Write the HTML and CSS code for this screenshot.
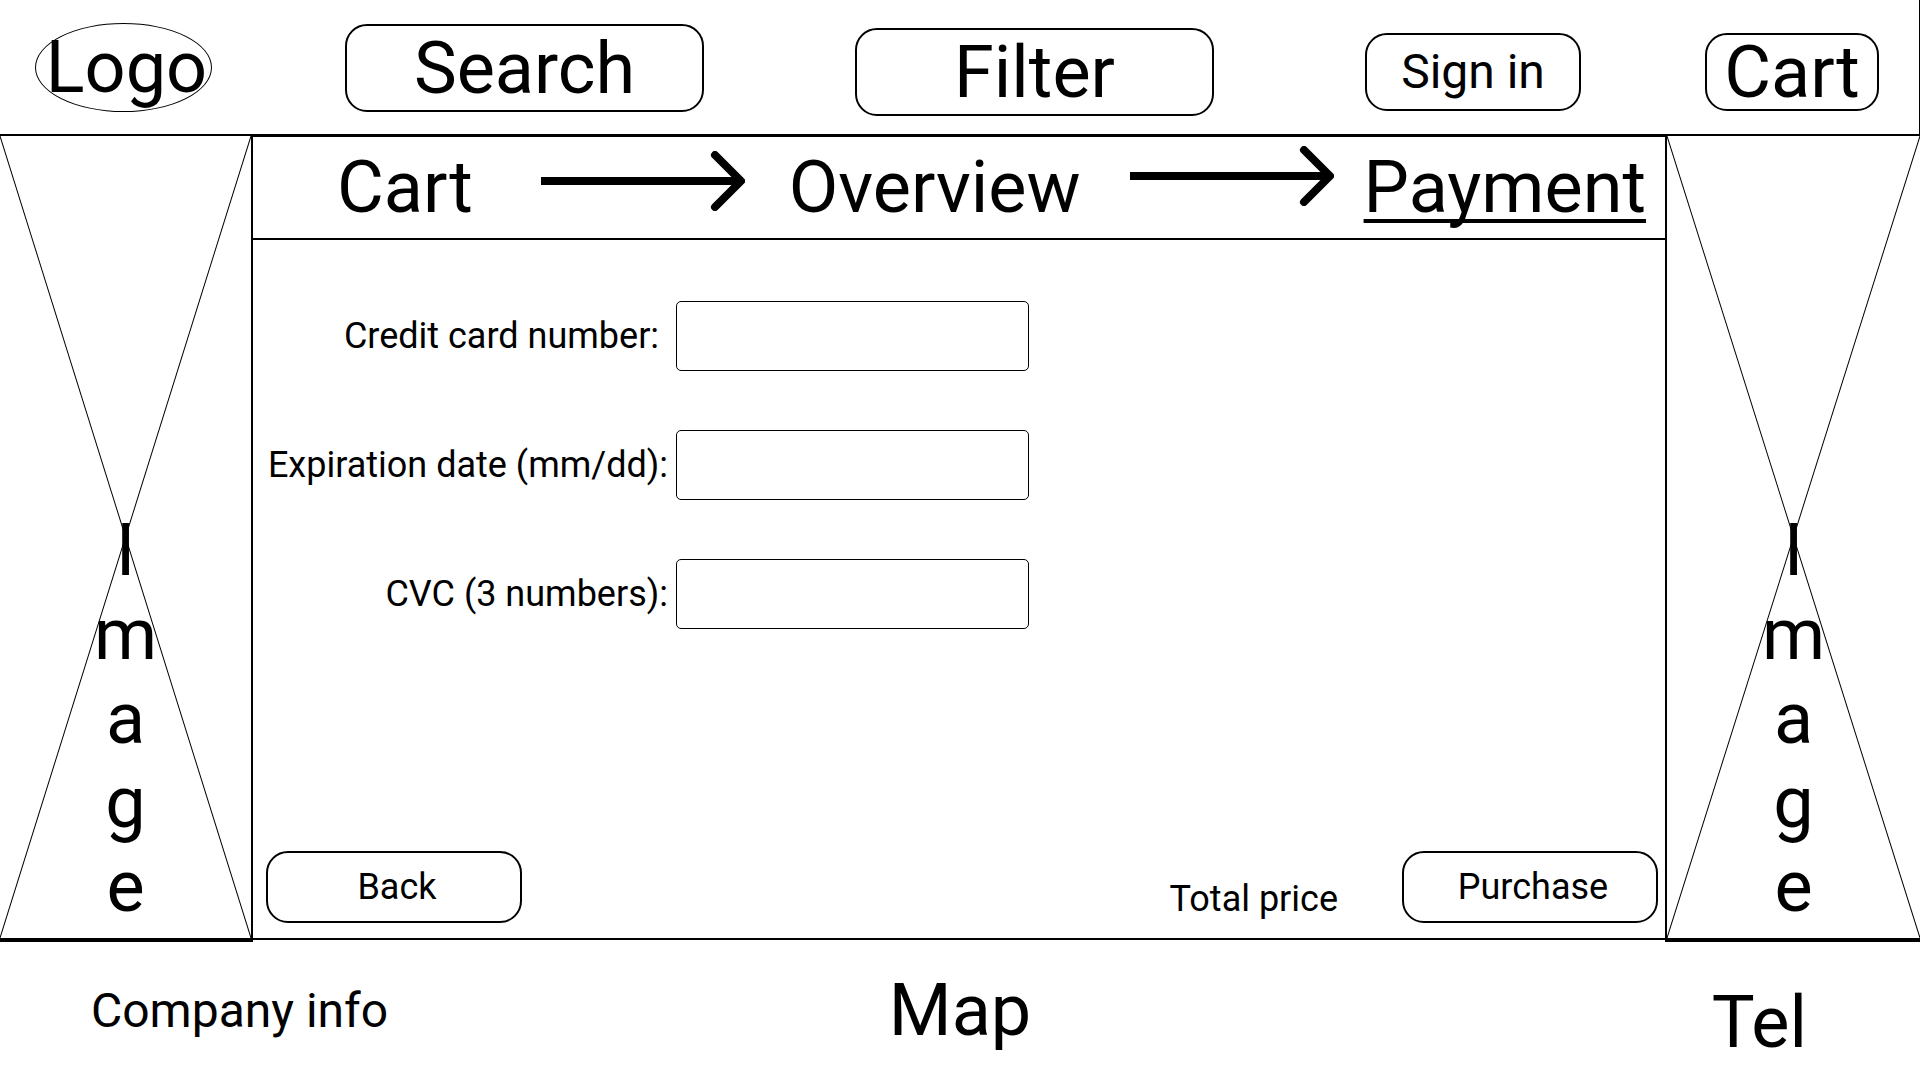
FILE: index.html
```html
<!DOCTYPE html>
<html lang="en">
<head>
  <meta charset="utf-8">
  <meta name="viewport" content="width=device-width, initial-scale=1">
  <title>Payment</title>
  <link rel="stylesheet" href="styles.css">
</head>
<body>
  <header class="header">
    <div class="header-lead">
      <a class="logo" href="#">Logo</a>
      <button class="box box-wide" type="button">Search</button>
    </div>
    <div class="header-actions">
      <button class="box box-wide filter" type="button">Filter</button>
      <button class="box box-sign-in" type="button">Sign in</button>
      <button class="box box-cart" type="button">Cart</button>
    </div>
  </header>

  <div class="content">
    <aside class="banner banner-left">
      <svg class="banner-cross" viewBox="0 0 100 100" preserveAspectRatio="none" aria-hidden="true">
        <path d="M0 0L100 100M100 0L0 100"/>
      </svg>
      <p class="banner-text"><span>I</span><span>m</span><span>a</span><span>g</span><span>e</span></p>
    </aside>

    <main class="checkout">
      <ol class="steps">
        <li class="step-cart">Cart</li>
        <li class="step-arrow" aria-hidden="true">
          <svg class="arrow" viewBox="0 0 204 60"><path class="shaft" d="M0 30H200"/><path class="head" d="M174 4L200 30L174 56"/></svg>
        </li>
        <li class="step-overview">Overview</li>
        <li class="step-arrow step-arrow-raised" aria-hidden="true">
          <svg class="arrow" viewBox="0 0 204 60"><path class="shaft" d="M0 30H200"/><path class="head" d="M174 4L200 30L174 56"/></svg>
        </li>
        <li class="step-payment" aria-current="step">Payment</li>
      </ol>

      <form class="payment">
        <div class="fields">
          <label for="card">Credit card number:&nbsp;</label>
          <input id="card" type="text" inputmode="numeric">
          <label for="expiry">Expiration date (mm/dd):</label>
          <input id="expiry" type="text">
          <label for="cvc">CVC (3 numbers):</label>
          <input id="cvc" type="text" inputmode="numeric">
        </div>
        <div class="actions">
          <button class="box box-action" type="button">Back</button>
          <p class="total">Total price</p>
          <button class="box box-action" type="submit">Purchase</button>
        </div>
      </form>
    </main>

    <aside class="banner banner-right">
      <svg class="banner-cross" viewBox="0 0 100 100" preserveAspectRatio="none" aria-hidden="true">
        <path d="M0 0L100 100M100 0L0 100"/>
      </svg>
      <p class="banner-text"><span>I</span><span>m</span><span>a</span><span>g</span><span>e</span></p>
    </aside>
  </div>

  <footer class="footer">
    <p class="company">Company info</p>
    <p class="map">Map</p>
    <p class="tel">Tel</p>
  </footer>
</body>
</html>
```
FILE: styles.css
```css
* {
  box-sizing: border-box;
}

body {
  display: flex;
  flex-direction: column;
  min-height: 100vh;
  margin: 0;
  background: #fff;
  color: #000;
  font-family: Roboto, sans-serif;
  font-size: 72px;
  line-height: 84px;
}

p,
ol {
  margin: 0;
  padding: 0;
  list-style: none;
}

/* Outlined buttons */
.box {
  height: 88px;
  padding: 2px 0 0;
  border: 2px solid #000;
  border-radius: 22px;
  background: #fff;
  color: inherit;
  font: inherit;
  line-height: 72px;
  white-space: nowrap;
}

.box-wide {
  width: 359px;
}

.box-sign-in {
  width: 216px;
  height: 78px;
  padding: 0;
  font-size: 48px;
}

.box-cart {
  width: 174px;
  height: 78px;
}

.box-action {
  width: 256px;
  height: 72px;
  padding: 0 0 0 6px;
  font-size: 36px;
  line-height: 48px;
}

/* Header */
.header {
  display: flex;
  justify-content: space-between;
  min-height: 136px;
  padding: 0 40px 0 35px;
  border-right: 1px solid #000;
  border-bottom: 2px solid #000;
}

.header-lead,
.header-actions {
  display: flex;
  align-items: center;
}

.header-lead {
  gap: 133px;
  padding-top: 1px;
}

.header-actions {
  gap: 124px;
  padding-top: 10px;
}

.filter {
  margin-right: 27px;
}

.logo {
  display: flex;
  align-items: center;
  justify-content: center;
  width: 177px;
  height: 89px;
  padding-left: 6px;
  border: 1px solid #000;
  border-radius: 50%;
  color: inherit;
  text-decoration: none;
}

/* Middle band */
.content {
  display: grid;
  grid-template-columns: 253px 1fr 255px;
  flex: 1;
}

.banner {
  position: relative;
  display: flex;
  flex-direction: column;
  justify-content: flex-end;
  padding-bottom: 9px;
  border-bottom: 4px solid #000;
}

.banner-left {
  border-right: 2px solid #000;
}

.banner-right {
  border-left: 2px solid #000;
}

.banner-cross {
  position: absolute;
  inset: 0;
  width: 100%;
  height: 100%;
}

.banner-cross path {
  fill: none;
  stroke: #000;
  stroke-width: 1px;
  vector-effect: non-scaling-stroke;
}

.banner-text {
  position: relative;
  text-align: center;
}

.banner-text span {
  display: block;
}

.checkout {
  display: flex;
  flex-direction: column;
  margin-bottom: 2px;
  border-top: 1px solid #000;
  border-bottom: 2px solid #000;
}

/* Progress steps */
.steps {
  display: flex;
  justify-content: space-between;
  padding: 9px 19px 8px 84px;
  border-bottom: 2px solid #000;
}

.step-arrow {
  display: flex;
  padding-top: 5px;
}

.step-arrow-raised {
  padding-top: 0;
}

.step-cart {
  margin-right: 39px;
}

.step-overview {
  margin: 0 20px 0 14px;
}

.step-payment {
  text-decoration: underline 4px;
  text-underline-offset: 7px;
  text-decoration-skip-ink: none;
}

.arrow {
  width: 204px;
  height: 60px;
  fill: none;
  stroke: #000;
  stroke-width: 8px;
}

.head {
  stroke-linecap: round;
  stroke-linejoin: round;
}

/* Payment form */
.payment {
  display: flex;
  flex: 1;
  flex-direction: column;
  justify-content: space-between;
  padding: 61px 7px 15px 13px;
  font-size: 36px;
  line-height: 48px;
}

.fields {
  display: grid;
  grid-template-columns: 402px minmax(0, 353px);
  gap: 59px 8px;
  align-items: center;
}

.fields label {
  text-align: right;
  white-space: nowrap;
}

.fields input {
  width: 100%;
  height: 70px;
  padding: 0 12px;
  border: 1px solid #000;
  border-radius: 5px;
  background: #fff;
  color: inherit;
  font: inherit;
}

.actions {
  display: flex;
  align-items: flex-end;
}

.total {
  margin: 0 64px 0 auto;
}

/* Footer */
.footer {
  display: grid;
  grid-template-columns: 1fr auto 1fr;
  align-items: center;
  min-height: 138px;
  padding: 15px 0;
}

.company {
  padding-left: 91px;
  font-size: 48px;
}

.tel {
  align-self: end;
  padding-right: 113px;
  text-align: right;
}
```
